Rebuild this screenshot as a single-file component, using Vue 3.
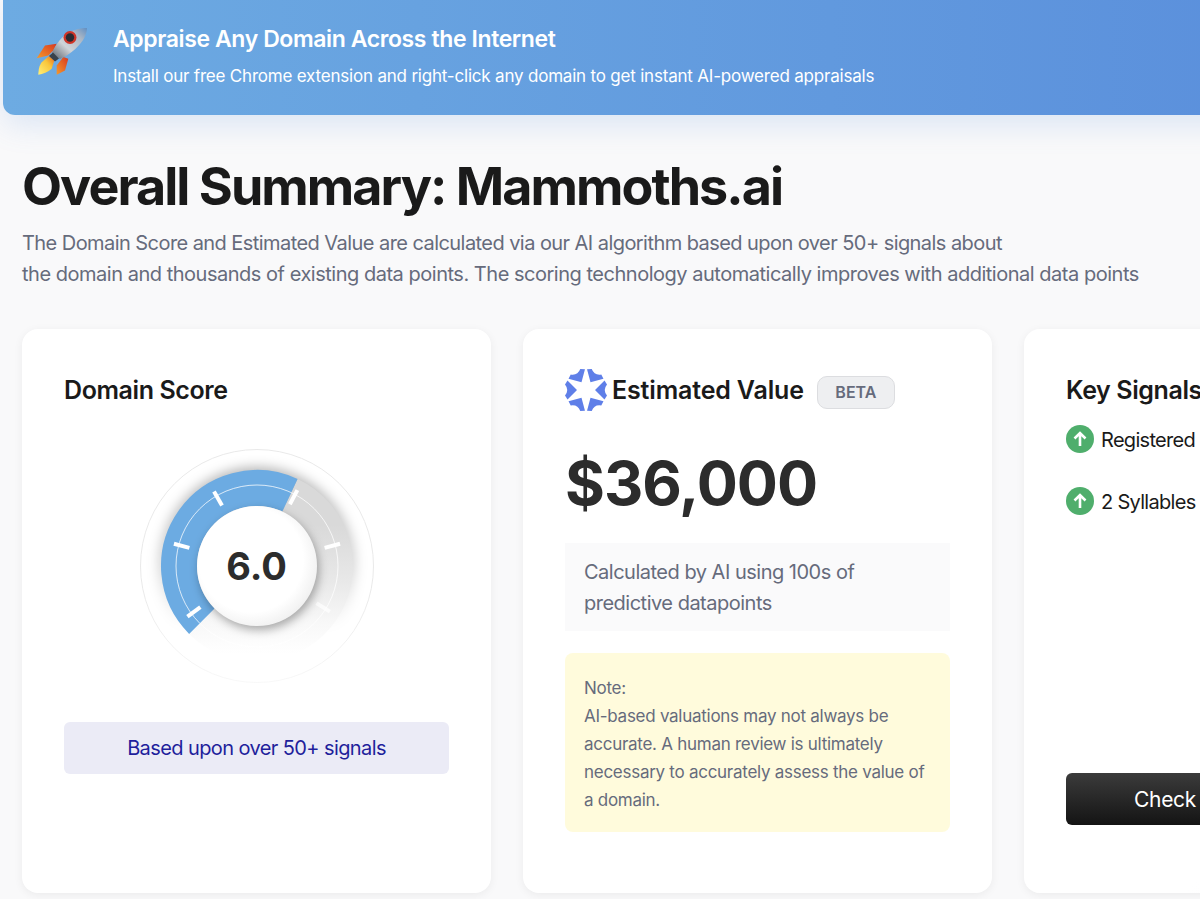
<template>
  <div class="page">
    <div class="banner">
      <svg class="rocket" viewBox="0 0 56 52" width="56" height="52">
        <defs>
          <linearGradient id="hull" x1="0" y1="1" x2="1" y2="0">
            <stop offset="0" stop-color="#59606a" />
            <stop offset="0.4" stop-color="#cfd3d8" />
            <stop offset="0.75" stop-color="#aab6c4" />
            <stop offset="1" stop-color="#5f8fc4" />
          </linearGradient>
          <linearGradient id="flame" x1="0" y1="1" x2="1" y2="0">
            <stop offset="0" stop-color="#fff07a" />
            <stop offset="0.6" stop-color="#f8c63a" />
            <stop offset="1" stop-color="#e8651f" />
          </linearGradient>
          <linearGradient id="fin" x1="0" y1="1" x2="1" y2="0">
            <stop offset="0" stop-color="#f59a2c" />
            <stop offset="1" stop-color="#d8381f" />
          </linearGradient>
        </defs>
        <path d="M3.7 35.2 L12 22.5 L23.7 20.8 L20.3 27.5 L15.3 32.5 Z" fill="url(#fin)" />
        <path d="M23.7 51.8 L23.7 42.5 L30.3 34 L35.3 35.8 L32 47.5 Z" fill="url(#fin)" />
        <path d="M5.3 51.8 C5.5 45 7 41 9 39 L16 33 L21.3 37.5 L18.7 45.8 C15 49 10 51 5.3 51.8 Z" fill="url(#flame)" />
        <path d="M19 30 C24 18 33 9 42 7 C46 5.5 50 5 54 5 C54 10 51 17 47 21 C41 28 34 33 27 36 Z" fill="url(#hull)" />
        <circle cx="37" cy="14.5" r="6.5" fill="#cf3427" />
        <circle cx="37" cy="14.5" r="4.2" fill="#2a2c33" />
        <path d="M16 33 L20 29.5 L26 35.5 L22 38.5 Z" fill="#39414b" />
      </svg>
      <div class="banner-text">
        <h2>Appraise Any Domain Across the Internet</h2>
        <p>Install our free Chrome extension and right-click any domain to get instant AI-powered appraisals</p>
      </div>
    </div>

    <section class="summary">
      <h1>Overall Summary: Mammoths.ai</h1>
      <p class="lead">
        <span class="first-line">The Domain Score and Estimated Value are calculated via our AI algorithm based upon over 50+ signals about</span><br />
        the domain and thousands of existing data points. The scoring technology automatically improves with additional data points
      </p>

      <div class="cards">
        <div class="card">
          <h3>Domain Score</h3>
          <div class="gauge">
            <svg viewBox="0 0 240 240" width="240" height="240">
              <defs>
                <linearGradient id="rest" gradientUnits="userSpaceOnUse" x1="0" y1="20" x2="0" y2="216">
                  <stop offset="0.3" stop-color="#d9d9d9" />
                  <stop offset="0.6" stop-color="#e9e9e9" />
                  <stop offset="0.8" stop-color="#f8f8f8" />
                  <stop offset="0.96" stop-color="#ffffff" />
                </linearGradient>
                <linearGradient id="shade" gradientUnits="userSpaceOnUse" x1="0" y1="20" x2="0" y2="200">
                  <stop offset="0" stop-color="#000" stop-opacity="0.3" />
                  <stop offset="0.55" stop-color="#000" stop-opacity="0.16" />
                  <stop offset="0.9" stop-color="#000" stop-opacity="0" />
                </linearGradient>
                <linearGradient id="ringFade" x1="0" y1="0" x2="0" y2="1">
                  <stop offset="0.6" stop-color="#e9e9e9" />
                  <stop offset="1" stop-color="#f8f8f8" />
                </linearGradient>
                <radialGradient id="knob" cx="0.45" cy="0.45" r="0.58">
                  <stop offset="0.75" stop-color="#ffffff" />
                  <stop offset="1" stop-color="#f0f0f0" />
                </radialGradient>
                <filter id="soft" x="-30%" y="-30%" width="160%" height="160%">
                  <feGaussianBlur stdDeviation="6" />
                </filter>
                <filter id="softer" x="-30%" y="-30%" width="160%" height="160%">
                  <feGaussianBlur stdDeviation="5" />
                </filter>
              </defs>
              <circle cx="120" cy="120" r="116.5" fill="#fff" stroke="url(#ringFade)" />
              <path :d="arc(-135, 135, 80)" fill="none" stroke="url(#shade)" stroke-width="38" filter="url(#soft)" />
              <path :d="arc(25, 225, 78)" fill="none" stroke="url(#rest)" stroke-width="36" />
              <path :d="arc(-135, 25, 78)" fill="none" stroke="#6cabe2" stroke-width="36" />
              <circle cx="120" cy="120" r="81" fill="none" stroke="#fff" stroke-opacity="0.75" />
              <line
                v-for="t in ticks"
                :key="t"
                :x1="point(t, 70).x"
                :y1="point(t, 70).y"
                :x2="point(t, 86).x"
                :y2="point(t, 86).y"
                stroke="#fff"
                stroke-width="4"
                :stroke-opacity="t === 122 ? 0.7 : 1"
              />
              <circle cx="122" cy="124" r="60" fill="#000" fill-opacity="0.32" filter="url(#softer)" />
              <circle cx="120" cy="120" r="60" fill="url(#knob)" />
            </svg>
            <span class="score">6.0</span>
          </div>
          <div class="based">Based upon over 50+ signals</div>
        </div>

        <div class="card">
          <div class="value-head">
            <svg viewBox="0 0 44 44" width="44" height="44">
              <g fill="#5f7fe8">
                <path
                  v-for="a in spokes"
                  :key="a"
                  :transform="`rotate(${a} 22 22)`"
                  d="M22 13 L12.5 3.5 L16.5 1 Q22 5.5 27.5 1 L31.5 3.5 Z"
                />
              </g>
            </svg>
            <h3 class="wide">Estimated Value</h3>
            <span class="beta">BETA</span>
          </div>
          <div class="price">$36,000</div>
          <div class="calc">Calculated by AI using 100s of predictive datapoints</div>
          <div class="note">Note:<br />AI-based valuations may not always be accurate. A human review is ultimately necessary to accurately assess the value of a domain.</div>
        </div>

        <div class="card signals">
          <h3>Key Signals</h3>
          <ul>
            <li v-for="s in signals" :key="s">
              <svg viewBox="0 0 28 28" width="28" height="28">
                <circle cx="14" cy="14" r="14" fill="#4fae6c" />
                <path d="M14 21 V8 M8.5 13.5 L14 8 L19.5 13.5" fill="none" stroke="#fff" stroke-width="2.6" />
              </svg>
              <span>{{ s }}</span>
            </li>
          </ul>
          <button class="check">Check Domain Availability</button>
        </div>
      </div>
    </section>
  </div>
</template>

<script setup>
const ticks = [-126, -75, -30, 28, 75, 122]
const spokes = [30, 90, 150, 210, 270, 330]
const signals = ['Registered Before', '2 Syllables']

function point(deg, r) {
  const rad = (deg * Math.PI) / 180
  return { x: 120 + r * Math.sin(rad), y: 120 - r * Math.cos(rad) }
}

function arc(from, to, r) {
  const a = point(from, r)
  const b = point(to, r)
  const large = to - from > 180 ? 1 : 0
  return `M${a.x} ${a.y} A${r} ${r} 0 ${large} 1 ${b.x} ${b.y}`
}
</script>

<style>
html,
body {
  margin: 0;
  overflow: hidden;
  background: #f9f9fa;
}
</style>

<style scoped>
.page {
  width: 1200px;
  height: 899px;
  overflow: hidden;
  font-family: Inter, "Liberation Sans", sans-serif;
  color: #1a1a1a;
}

.banner {
  margin-left: 3px;
  width: 1240px;
  height: 115px;
  box-sizing: border-box;
  padding: 0 0 4px 30px;
  display: flex;
  align-items: center;
  gap: 24px;
  color: #fff;
  border-radius: 0 0 12px 12px;
  background: linear-gradient(90deg, #6dabe2, #5b90dc);
  box-shadow: 0 10px 30px rgba(91, 144, 220, 0.18);
}

.rocket {
  flex: none;
  margin-top: -14px;
}

.banner-text h2 {
  margin: 0 0 12px;
  font-size: 23px;
  line-height: 28px;
  font-weight: 600;
  letter-spacing: -0.4px;
}

.banner-text p {
  margin: 0;
  font-size: 17px;
  line-height: 22px;
  letter-spacing: -0.2px;
}

.summary {
  padding: 38px 0 0 22px;
}

h1 {
  margin: 0;
  font-size: 52px;
  line-height: 68px;
  font-weight: 700;
  letter-spacing: -1.95px;
}

.lead {
  margin: 7px 0 0;
  font-size: 20px;
  line-height: 31px;
  color: #666b7c;
  letter-spacing: -0.48px;
  white-space: nowrap;
}

.first-line {
  letter-spacing: -0.56px;
}

.cards {
  margin-top: 39px;
  display: flex;
  gap: 32px;
}

.card {
  flex: none;
  box-sizing: border-box;
  width: 469px;
  height: 564px;
  padding: 43px 42px 42px;
  background: #fff;
  border-radius: 16px;
  box-shadow: 0 2px 10px rgba(0, 0, 0, 0.06);
}

h3 {
  margin: 0;
  font-size: 25px;
  line-height: 36px;
  font-weight: 600;
  letter-spacing: -0.4px;
  white-space: nowrap;
}

h3.wide {
  letter-spacing: -0.15px;
}

.gauge {
  position: relative;
  width: 240px;
  height: 240px;
  margin: 38px auto 0;
}

.score {
  position: absolute;
  inset: 0;
  display: flex;
  align-items: center;
  justify-content: center;
  font-size: 38px;
  font-weight: 700;
  color: #2c2c2c;
}

.based {
  margin-top: 36px;
  height: 52px;
  display: flex;
  align-items: center;
  justify-content: center;
  border-radius: 6px;
  background: #ebebf6;
  color: #1f1f9c;
  font-size: 20px;
  letter-spacing: -0.6px;
}

.value-head {
  display: flex;
  align-items: center;
  gap: 4px;
  height: 36px;
  margin-left: -1px;
}

.beta {
  margin: 4px 0 0 9px;
  width: 78px;
  height: 33px;
  box-sizing: border-box;
  display: flex;
  align-items: center;
  justify-content: center;
  border: 1px solid #dcdde0;
  border-radius: 10px;
  background: #eeeff1;
  color: #666b7c;
  font-size: 16px;
  font-weight: 600;
}

.price {
  margin-top: 35px;
  font-size: 61px;
  line-height: 80px;
  font-weight: 700;
  color: #2c2c2c;
  letter-spacing: -1px;
}

.calc {
  margin-top: 20px;
  padding: 14px 19px 12px;
  background: #fafafb;
  color: #666b7c;
  font-size: 20px;
  line-height: 31px;
  letter-spacing: -0.5px;
}

.note {
  margin-top: 22px;
  padding: 21px 19px 18px;
  border-radius: 8px;
  background: #fffbdc;
  color: #666b7c;
  font-size: 17px;
  line-height: 28px;
  letter-spacing: -0.27px;
}

.signals {
  display: flex;
  flex-direction: column;
  background: linear-gradient(135deg, #fff 70%, #f9f9fb);
}

.signals ul {
  margin: 0;
  padding: 0;
  list-style: none;
}

.signals li {
  display: flex;
  align-items: center;
  gap: 7px;
  height: 62px;
  font-size: 20px;
  letter-spacing: -0.7px;
  white-space: nowrap;
}

.signals li span {
  padding-top: 2px;
}

.check {
  margin-top: auto;
  margin-bottom: 26px;
  height: 52px;
  border: none;
  border-radius: 6px;
  background: linear-gradient(180deg, #3b3b3b, #141414);
  color: #fff;
  font: inherit;
  font-size: 21px;
  letter-spacing: -0.3px;
}
</style>
